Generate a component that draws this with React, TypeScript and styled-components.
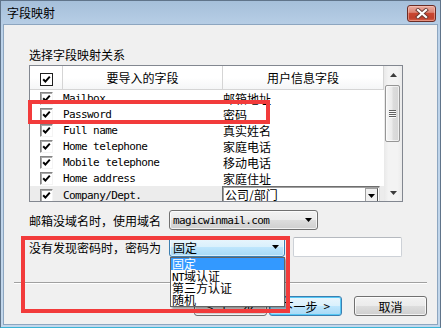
import React from "react";
import styled, { createGlobalStyle, css } from "styled-components";

const CJK = `"Noto Sans CJK SC", "Liberation Sans", sans-serif`;
const MONO = `"DejaVu Sans Mono", "Liberation Mono", monospace`;

const GlobalStyle = createGlobalStyle`
  html, body { margin: 0; padding: 0; background: #fff; }
  body {
    width: 441px; height: 328px; overflow: hidden;
    font-family: ${CJK}; font-size: 12px; color: #000;
  }
  * { box-sizing: border-box; }
`;

const monoText = css`
  font-family: ${MONO};
  font-size: 11px;
  letter-spacing: -0.6px;
  white-space: pre;
`;

const Window = styled.div`
  width: 441px;
  height: 328px;
  display: flex;
  flex-direction: column;
  background: linear-gradient(#a5bfda, #bcd2e9 30px, #c3d7eb);
  border: 1px solid #60748a;
  border-bottom-color: #3cb4d6;
  padding: 0 2px 2px 2px;
`;

const TitleBar = styled.div`
  height: 23px;
  flex: none;
  display: flex;
  justify-content: space-between;
  align-items: flex-start;
  padding: 4px 2px 0 4px;
`;

const TitleText = styled.div`
  font-family: ${CJK};
  font-size: 12px;
  line-height: 14px;
  margin-top: 1px;
  color: #000;
`;

const CloseButton = styled.div`
  width: 29px;
  height: 17px;
  border: 1px solid #6b2c25;
  border-radius: 3px;
  background: linear-gradient(#e9aca0 0%, #dc8474 42%, #c84631 50%, #c0402c 80%, #d7624b 100%);
  box-shadow: inset 0 0 0 1px rgba(255, 210, 200, 0.45);
  display: flex;
  align-items: center;
  justify-content: center;
`;

const Client = styled.div`
  flex: 1;
  position: relative;
  background: #f0f0f0;
  border: 1px solid #8da6c0;
  padding: 0 10px 0 10px;
  display: flex;
  flex-direction: column;
`;

const Section = styled.div`
  padding: 23px 0 0 15px;
  display: flex;
  flex-direction: column;
`;

const Label = styled.div`
  font-family: ${CJK};
  font-size: 12px;
  line-height: 14px;
  height: 14px;
  white-space: nowrap;
`;

const ListBox = styled.div`
  margin-top: 3px;
  width: 374px;
  height: 137px;
  border: 1px solid #828790;
  background: #fff;
  display: flex;
`;

const ListMain = styled.div`
  width: 354px;
  display: flex;
  flex-direction: column;
`;

const Header = styled.div`
  height: 24px;
  flex: none;
  display: grid;
  grid-template-columns: 33px 160px 161px;
  border-bottom: 1px solid #d5d5d5;
  background: linear-gradient(#ffffff, #ffffff 50%, #f5f6f7);
`;

const HeaderCell = styled.div<{ $center?: boolean }>`
  border-right: 1px solid #d5d5d5;
  display: flex;
  justify-content: center;
  align-items: ${(p) => (p.$center ? "center" : "flex-start")};
  padding-top: ${(p) => (p.$center ? "1px" : "7px")};
  font-family: ${CJK};
  font-size: 12px;
  line-height: 14px;
`;

const Body = styled.div`
  flex: 1;
  overflow: hidden;
`;

const Row = styled.div<{ $gray?: boolean }>`
  height: 16px;
  display: grid;
  grid-template-columns: 33px 160px 161px;
  align-items: center;
  background: ${(p) => (p.$gray ? "#ececec" : "transparent")};
`;

const CheckCell = styled.div`
  display: flex;
  justify-content: center;
`;

const CheckBox = styled.div<{ $header?: boolean }>`
  width: 13px;
  height: 13px;
  background: #fff;
  display: flex;
  align-items: center;
  justify-content: center;
  ${(p) =>
    p.$header
      ? css`
          border: 1px solid #1e1e1e;
        `
      : css`
          border-top: 1px solid #858585;
          border-left: 1px solid #858585;
          border-right: 1px solid #f4f4f4;
          border-bottom: 1px solid #f4f4f4;
          box-shadow: inset 1px 1px 0 #a8a8a8;
        `}
`;

const EnText = styled.div`
  ${monoText};
  line-height: 16px;
  padding-top: 1px;
  color: #000;
`;

const CnText = styled.div`
  font-family: ${CJK};
  font-size: 12px;
  line-height: 16px;
  padding-top: 1px;
  white-space: nowrap;
`;

const CellCombo = styled.div`
  align-self: start;
  width: 158px;
  height: 18px;
  margin-left: -1px;
  background: #fff;
  border-top: 1px solid #6e6e6e;
  border-left: 1px solid #6e6e6e;
  border-right: 1px solid #d8d8d8;
  box-shadow: inset 1px 1px 0 #a0a0a0;
  display: flex;
  justify-content: space-between;
  align-items: flex-start;
  padding-left: 2px;
`;

const CellComboText = styled.div`
  font-family: ${CJK};
  font-size: 12px;
  line-height: 15px;
`;

const CellDropBtn = styled.div`
  width: 13px;
  height: 16px;
  margin: 1px 1px 0 0;
  background: #f0f0f0;
  border: 1px solid #a0a0a0;
  border-right-color: #505050;
  display: flex;
  align-items: center;
  justify-content: center;
`;

const ScrollBar = styled.div`
  width: 18px;
  display: flex;
  flex-direction: column;
  background: linear-gradient(90deg, #e9e9e9, #f3f3f3 25%, #f3f3f3 75%, #ebebeb);
`;

const ScrollArrow = styled.div`
  height: 17px;
  flex: none;
  display: flex;
  align-items: center;
  justify-content: center;
`;

const ScrollTrack = styled.div`
  flex: 1;
  display: flex;
  flex-direction: column;
`;

const Thumb = styled.div`
  height: 57px;
  margin: 2px 2px 0 1px;
  border: 1px solid #969696;
  border-radius: 2px;
  background: linear-gradient(90deg, #f6f6f6, #ebebeb 45%, #dcdcdc 55%, #d6d6d6);
  box-shadow: inset 0 0 0 1px rgba(255, 255, 255, 0.6);
  display: flex;
  align-items: center;
  justify-content: center;
`;

const FieldRow = styled.div<{ $mt: number }>`
  margin-top: ${(p) => p.$mt}px;
  height: 20px;
  display: flex;
  align-items: center;
  gap: 8px;
`;

const FieldLabel = styled.div`
  width: 132px;
  flex: none;
  font-family: ${CJK};
  font-size: 12px;
  line-height: 14px;
  padding-top: 1px;
  white-space: nowrap;
`;

const Combo = styled.div<{ $w: number; $focused?: boolean }>`
  width: ${(p) => p.$w}px;
  height: 20px;
  flex: none;
  border-radius: 3px;
  display: flex;
  align-items: center;
  justify-content: space-between;
  padding: 0 5px 0 3px;
  ${(p) =>
    p.$focused
      ? css`
          border: 1px solid #3c7fb1;
          background: linear-gradient(#eaf6fd 0%, #d9f0fc 50%, #bee6fd 50%, #a7d9f5 100%);
          box-shadow: inset 0 0 0 1px rgba(255, 255, 255, 0.55);
        `
      : css`
          border: 1px solid #707070;
          background: linear-gradient(#f2f2f2 0%, #ebebeb 50%, #dddddd 50%, #cfcfcf 100%);
          box-shadow: inset 0 0 0 1px rgba(255, 255, 255, 0.7);
        `}
`;

const ComboMono = styled.span`
  ${monoText};
  line-height: 16px;
  padding-top: 1px;
`;

const ComboCn = styled.span`
  font-family: ${CJK};
  font-size: 12px;
  line-height: 16px;
  padding-top: 1px;
`;

const ComboWrap = styled.div`
  position: relative;
  flex: none;
`;

const DropList = styled.div`
  position: absolute;
  top: 100%;
  left: 1px;
  width: 115px;
  background: #fff;
  border: 1px solid #646464;
  box-shadow: 2px 2px 2px rgba(0, 0, 0, 0.35);
  z-index: 5;
`;

const DropItem = styled.div<{ $selected?: boolean }>`
  height: 12px;
  line-height: 12px;
  font-family: ${CJK};
  font-size: 12px;
  padding-left: 1px;
  white-space: nowrap;
  overflow: visible;
  background: ${(p) => (p.$selected ? "#3399ff" : "transparent")};
  color: ${(p) => (p.$selected ? "#fff" : "#000")};
`;

const Ascii = styled.span`
  ${monoText};
`;

const TextInput = styled.div`
  width: 109px;
  height: 20px;
  flex: none;
  background: #fff;
  border: 1px solid #cdd1d7;
  border-top-color: #b5b9bf;
  border-radius: 2px;
`;

const Separator = styled.div`
  margin-top: 25px;
  height: 1px;
  background: #a0a0a0;
  box-shadow: 0 1px 0 #ffffff;
`;

const ButtonRow = styled.div`
  margin-top: 13px;
  display: flex;
  justify-content: flex-end;
  gap: 2px;
`;

const Button = styled.div<{ $primary?: boolean; $spaced?: boolean }>`
  width: 73px;
  height: 20px;
  border-radius: 3px;
  margin-left: ${(p) => (p.$spaced ? "10px" : "0")};
  display: flex;
  align-items: center;
  justify-content: center;
  font-family: ${CJK};
  font-size: 12px;
  line-height: 14px;
  padding-top: 1px;
  white-space: pre;
  ${(p) =>
    p.$primary
      ? css`
          border: 1px solid #3c7fb1;
          background: linear-gradient(#eaf6fd 0%, #d9f0fc 50%, #bee6fd 50%, #a7d9f5 100%);
          box-shadow: inset 0 0 0 1px #56c8f5;
        `
      : css`
          border: 1px solid #707070;
          background: linear-gradient(#f2f2f2 0%, #ebebeb 50%, #dddddd 50%, #cfcfcf 100%);
          box-shadow: inset 0 0 0 1px rgba(255, 255, 255, 0.75);
        `}
`;

const Annotation = styled.div<{ $x: number; $y: number; $w: number; $h: number }>`
  position: absolute;
  left: ${(p) => p.$x}px;
  top: ${(p) => p.$y}px;
  width: ${(p) => p.$w}px;
  height: ${(p) => p.$h}px;
  border: 4px solid #f23b3b;
  z-index: 10;
  pointer-events: none;
`;

const CheckMark = () => (
  <svg width="11" height="11" viewBox="0 0 11 11">
    <polyline points="2.2,5.2 4.4,7.6 8.8,2.6" fill="none" stroke="#000" strokeWidth="2" />
  </svg>
);

const DownTri = ({ color = "#000" }: { color?: string }) => (
  <svg width="7" height="4" viewBox="0 0 7 4">
    <polygon points="0,0 7,0 3.5,4" fill={color} />
  </svg>
);

const UpTri = ({ color = "#000" }: { color?: string }) => (
  <svg width="7" height="4" viewBox="0 0 7 4">
    <polygon points="0,4 7,4 3.5,0" fill={color} />
  </svg>
);

const Grip = () => (
  <svg width="7" height="8" viewBox="0 0 7 8">
    {[0, 2, 4, 6].map((y) => (
      <g key={y}>
        <rect x="0" y={y} width="7" height="1" fill="#5f5f5f" />
        <rect x="0" y={y + 1} width="7" height="1" fill="#ffffff" opacity="0.8" />
      </g>
    ))}
  </svg>
);

const CloseX = () => (
  <svg width="14" height="11" viewBox="0 0 14 11">
    <path d="M3 2 L11 9 M11 2 L3 9" stroke="#6a3a34" strokeWidth="4" strokeLinecap="square" />
    <path d="M3 2 L11 9 M11 2 L3 9" stroke="#ffffff" strokeWidth="2.2" strokeLinecap="square" />
  </svg>
);

type FieldRowData = { en: string; cn: string; combo?: boolean };

const rows: FieldRowData[] = [
  { en: "Mailbox", cn: "邮箱地址" },
  { en: "Password", cn: "密码" },
  { en: "Full name", cn: "真实姓名" },
  { en: "Home telephone", cn: "家庭电话" },
  { en: "Mobile telephone", cn: "移动电话" },
  { en: "Home address", cn: "家庭住址" },
  { en: "Company/Dept.", cn: "公司/部门", combo: true },
];

export default function App() {
  return (
    <>
      <GlobalStyle />
      <Window>
        <TitleBar>
          <TitleText>字段映射</TitleText>
          <CloseButton>
            <CloseX />
          </CloseButton>
        </TitleBar>
        <Client>
          <Section>
            <Label>选择字段映射关系</Label>
            <ListBox>
              <ListMain>
                <Header>
                  <HeaderCell>
                    <CheckBox $header>
                      <CheckMark />
                    </CheckBox>
                  </HeaderCell>
                  <HeaderCell $center>要导入的字段</HeaderCell>
                  <HeaderCell $center>用户信息字段</HeaderCell>
                </Header>
                <Body>
                  {rows.map((r) => (
                    <Row key={r.en} $gray={r.combo}>
                      <CheckCell>
                        <CheckBox>
                          <CheckMark />
                        </CheckBox>
                      </CheckCell>
                      <EnText>{r.en}</EnText>
                      {r.combo ? (
                        <CellCombo>
                          <CellComboText>{r.cn}</CellComboText>
                          <CellDropBtn>
                            <DownTri />
                          </CellDropBtn>
                        </CellCombo>
                      ) : (
                        <CnText>{r.cn}</CnText>
                      )}
                    </Row>
                  ))}
                </Body>
              </ListMain>
              <ScrollBar>
                <ScrollArrow>
                  <UpTri color="#3c3c3c" />
                </ScrollArrow>
                <ScrollTrack>
                  <Thumb>
                    <Grip />
                  </Thumb>
                </ScrollTrack>
                <ScrollArrow>
                  <DownTri color="#3c3c3c" />
                </ScrollArrow>
              </ScrollBar>
            </ListBox>

            <FieldRow $mt={8}>
              <FieldLabel>邮箱没域名时，使用域名</FieldLabel>
              <Combo $w={149}>
                <ComboMono>magicwinmail.com</ComboMono>
                <DownTri />
              </Combo>
            </FieldRow>

            <FieldRow $mt={7}>
              <FieldLabel>没有发现密码时，密码为</FieldLabel>
              <ComboWrap>
                <Combo $w={116} $focused>
                  <ComboCn>固定</ComboCn>
                  <DownTri />
                </Combo>
                <DropList>
                  <DropItem $selected>固定</DropItem>
                  <DropItem>
                    <Ascii>NT</Ascii>域认证
                  </DropItem>
                  <DropItem>第三方认证</DropItem>
                  <DropItem>随机</DropItem>
                </DropList>
              </ComboWrap>
              <TextInput />
            </FieldRow>
          </Section>

          <Separator />

          <ButtonRow>
            <Button>
              <Ascii>{"< "}</Ascii>上一步
            </Button>
            <Button $primary>
              下一步<Ascii>{" >"}</Ascii>
            </Button>
            <Button $spaced>取消</Button>
          </ButtonRow>

          <Annotation $x={24} $y={75} $w={242} $h={24} />
          <Annotation $x={17} $y={211} $w={269} $h={77} />
        </Client>
      </Window>
    </>
  );
}
